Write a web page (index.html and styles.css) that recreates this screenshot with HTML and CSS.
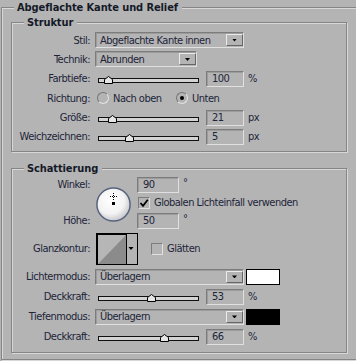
FILE: index.html
```html
<!DOCTYPE html>
<html lang="de">
<head>
<meta charset="utf-8">
<title>Abgeflachte Kante und Relief</title>
<link rel="stylesheet" href="styles.css">
</head>
<body>
<fieldset class="group outer">
  <legend>Abgeflachte Kante und Relief</legend>

  <fieldset class="group sub struktur">
    <legend>Struktur</legend>
    <div class="form">
      <span class="lbl">Stil:</span>
      <div class="ctl">
        <div class="select w149"><span class="val">Abgeflachte Kante innen</span><span class="btn"><i class="arr"></i></span></div>
      </div>

      <span class="lbl">Technik:</span>
      <div class="ctl">
        <div class="select w102"><span class="val">Abrunden</span><span class="btn"><i class="arr"></i></span></div>
      </div>

      <span class="lbl">Farbtiefe:</span>
      <div class="ctl">
        <div class="slider"><svg class="thumb" style="left:5px" width="9" height="8" viewBox="0 0 9 8"><polygon points="0.5,7.5 0.5,3.5 4.5,0.5 8.5,3.5 8.5,7.5" fill="#e6e6e6" stroke="#000"/></svg></div>
        <div class="num">100</div><span class="unit">%</span>
      </div>

      <span class="lbl">Richtung:</span>
      <div class="ctl">
        <label class="opt first"><span class="radio"></span>Nach oben</label>
        <label class="opt"><span class="radio on"></span>Unten</label>
      </div>

      <span class="lbl">Größe:</span>
      <div class="ctl">
        <div class="slider"><svg class="thumb" style="left:9px" width="9" height="8" viewBox="0 0 9 8"><polygon points="0.5,7.5 0.5,3.5 4.5,0.5 8.5,3.5 8.5,7.5" fill="#e6e6e6" stroke="#000"/></svg></div>
        <div class="num">21</div><span class="unit">px</span>
      </div>

      <span class="lbl">Weichzeichnen:</span>
      <div class="ctl">
        <div class="slider"><svg class="thumb" style="left:26px" width="9" height="8" viewBox="0 0 9 8"><polygon points="0.5,7.5 0.5,3.5 4.5,0.5 8.5,3.5 8.5,7.5" fill="#e6e6e6" stroke="#000"/></svg></div>
        <div class="num">5</div><span class="unit">px</span>
      </div>
    </div>
  </fieldset>

  <fieldset class="group sub schatt">
    <legend>Schattierung</legend>

    <div class="angle-block">
      <div class="lbl-col"><span class="lbl">Winkel:</span><span class="lbl">Höhe:</span></div>
      <div class="dial">
        <svg width="35" height="35" viewBox="0 0 35 35">
          <defs>
            <radialGradient id="dg" cx="42%" cy="38%" r="62%">
              <stop offset="0" stop-color="#ffffff"/>
              <stop offset="0.65" stop-color="#f3f3f3"/>
              <stop offset="1" stop-color="#c9c9ce"/>
            </radialGradient>
          </defs>
          <circle cx="17.5" cy="17.5" r="16.6" fill="url(#dg)" stroke="#58637f" stroke-width="1.5"/>
          <line x1="17.5" y1="6" x2="17.5" y2="13" stroke="#000" stroke-dasharray="1 1"/>
          <line x1="14" y1="9.5" x2="21" y2="9.5" stroke="#000" stroke-dasharray="1 1"/>
          <rect x="16" y="15" width="3" height="3" fill="#000"/>
        </svg>
      </div>
      <div class="angle-ctl">
        <div class="line"><div class="num w42">90</div><span class="deg">°</span></div>
        <div class="line mid">
          <span class="check"><svg width="10" height="10" viewBox="0 0 10 10"><path d="M1.5 5 L4 7.8 L8.8 1.8" fill="none" stroke="#000" stroke-width="1.8"/></svg></span>
          <span class="ctext">Globalen Lichteinfall verwenden</span>
        </div>
        <div class="line"><div class="num w42">50</div><span class="deg">°</span></div>
      </div>
    </div>

    <div class="row tall">
      <span class="lbl">Glanzkontur:</span>
      <div class="contour">
        <svg width="42" height="32" viewBox="0 0 42 32">
          <rect x="0" y="0" width="42" height="32" fill="#000"/>
          <rect x="2" y="2" width="28" height="29" fill="#b6b6b6"/>
          <polygon points="2,31 30,2 30,31" fill="#8b8b8b"/>
          <rect x="31" y="1" width="10" height="30" fill="#b4b4b4"/>
          <polygon points="32.5,14 37.5,14 35,17" fill="#000"/>
        </svg>
      </div>
      <span class="check gl"></span><span class="ctext">Glätten</span>
    </div>

    <div class="row">
      <span class="lbl">Lichtermodus:</span>
      <div class="select w149"><span class="val">Überlagern</span><span class="btn"><i class="arr"></i></span></div>
      <span class="swatch white"></span>
    </div>

    <div class="row">
      <span class="lbl">Deckkraft:</span>
      <div class="slider"><svg class="thumb" style="left:48px" width="9" height="8" viewBox="0 0 9 8"><polygon points="0.5,7.5 0.5,3.5 4.5,0.5 8.5,3.5 8.5,7.5" fill="#e6e6e6" stroke="#000"/></svg></div>
      <div class="num">53</div><span class="unit">%</span>
    </div>

    <div class="row">
      <span class="lbl">Tiefenmodus:</span>
      <div class="select w149"><span class="val">Überlagern</span><span class="btn"><i class="arr"></i></span></div>
      <span class="swatch black"></span>
    </div>

    <div class="row">
      <span class="lbl">Deckkraft:</span>
      <div class="slider"><svg class="thumb" style="left:61px" width="9" height="8" viewBox="0 0 9 8"><polygon points="0.5,7.5 0.5,3.5 4.5,0.5 8.5,3.5 8.5,7.5" fill="#e6e6e6" stroke="#000"/></svg></div>
      <div class="num">66</div><span class="unit">%</span>
    </div>
  </fieldset>
</fieldset>
</body>
</html>
```

FILE: styles.css
```css
* { box-sizing: border-box; }
html, body { margin: 0; padding: 0; }
body {
  background: #b4b4b4;
  width: 356px;
  height: 361px;
  overflow: hidden;
  font: 11px "DejaVu Sans Condensed", "Liberation Sans", sans-serif;
  letter-spacing: -0.5px;
  color: #1d2439;
}

/* etched group boxes */
.group {
  margin: 0;
  padding: 0;
  min-width: 0;
  border: 1px solid #858585;
  box-shadow: inset 1px 1px 0 #d8d8d8, 1px 1px 0 #d8d8d8;
}
.group > legend {
  margin-left: 12px;
  padding: 0 4px 0 3px;
  height: 13px;
  line-height: 13px;
  background: #b4b4b4;
  font-weight: bold;
  letter-spacing: -0.1px;
  color: #151a28;
}
.outer {
  margin: 1px 0 0 1px;
  width: 372px;
  padding-bottom: 6px;
}
.sub {
  margin: 2px 0 0 9px;
  width: 336px;
}
.struktur { padding: 3px 0 6px 0; }
.schatt { margin-top: 10px; padding: 2px 0 7px 0; }

/* Struktur form */
.form {
  display: grid;
  grid-template-columns: 78px auto;
  column-gap: 5px;
  grid-auto-rows: 16px;
  row-gap: 3.4px;
  align-items: center;
}
.lbl { text-align: right; white-space: nowrap; }
.ctl { display: flex; align-items: center; height: 16px; }

/* dropdown */
.select {
  display: flex;
  align-items: center;
  height: 16px;
  padding-left: 4px;
  border: 1px solid;
  border-color: #7c7c7c #e0e0e0 #e0e0e0 #7c7c7c;
  box-shadow: inset 1px 1px 0 #9c9c9c;
  white-space: nowrap;
}
.w149 { width: 149px; }
.w102 { width: 102px; }
.select .val { flex: 1; }
.select .btn {
  width: 17px;
  height: 12px;
  border: 1px solid;
  border-color: #ececec #666 #666 #ececec;
  display: flex;
  align-items: center;
  justify-content: center;
}
.arr {
  display: block;
  width: 5px;
  height: 3px;
  background: #000;
  clip-path: polygon(0 0, 100% 0, 50% 100%);
}

/* slider */
.slider {
  position: relative;
  flex: none;
  width: 101px;
  height: 5px;
  margin: 3px 0 0 3px;
  border: 1px solid #111;
  background: #d4d4d4;
}
.thumb { position: absolute; bottom: -2px; display: block; }

/* numeric field */
.num {
  flex: none;
  width: 38px;
  height: 16px;
  margin-left: 7px;
  padding-left: 5px;
  display: flex;
  align-items: center;
  border: 1px solid;
  border-color: #7c7c7c #e0e0e0 #e0e0e0 #7c7c7c;
  box-shadow: inset 1px 1px 0 #9c9c9c;
}
.num.w42 { width: 42px; margin-left: 0; }
.unit { margin-left: 4px; }
.deg { margin-left: 4px; align-self: flex-start; line-height: 12px; }

/* radios */
.opt { display: flex; align-items: center; gap: 4px; white-space: nowrap; }
.opt.first { width: 79px; margin-left: 2px; }
.radio {
  width: 12px;
  height: 12px;
  border-radius: 50%;
  border: 1px solid;
  border-color: #767676 #e4e4e4 #e4e4e4 #767676;
  display: flex;
  align-items: center;
  justify-content: center;
}
.radio.on::after {
  content: "";
  width: 4px;
  height: 4px;
  border-radius: 50%;
  background: #000;
}

/* checkbox */
.check {
  flex: none;
  width: 12px;
  height: 12px;
  border: 1px solid;
  border-color: #7c7c7c #e0e0e0 #e0e0e0 #7c7c7c;
  display: flex;
  align-items: center;
  justify-content: center;
}
.ctext { white-space: nowrap; }

/* Schattierung */
.angle-block { display: flex; height: 52px; }
.lbl-col {
  width: 78px;
  display: flex;
  flex-direction: column;
  justify-content: space-between;
}
.lbl-col .lbl { height: 16px; line-height: 16px; }
.dial { margin: 10px 0 0 6px; width: 35px; height: 35px; }
.dial svg { display: block; }
.angle-ctl { margin-left: 6px; display: flex; flex-direction: column; }
.line { display: flex; align-items: flex-start; height: 16px; }
.line .num { align-self: center; }
.line.mid { height: 20px; align-items: center; }
.line.mid .check { margin: 0 4px 0 1px; }

.row { display: flex; align-items: center; height: 16px; margin-top: 4px; }
.row > .lbl { width: 78px; margin-right: 5px; flex: none; }
.row.tall { height: 32px; }
.contour { margin-left: 1px; width: 42px; height: 32px; }
.contour svg { display: block; }
.check.gl { margin: 0 4px 0 13px; }

.swatch { width: 34px; height: 16px; margin-left: 2px; flex: none; }
.swatch.white { background: #fff; border: 1px solid #000; }
.swatch.black { background: #000; }
.row .slider { margin-left: 3px; }
```
